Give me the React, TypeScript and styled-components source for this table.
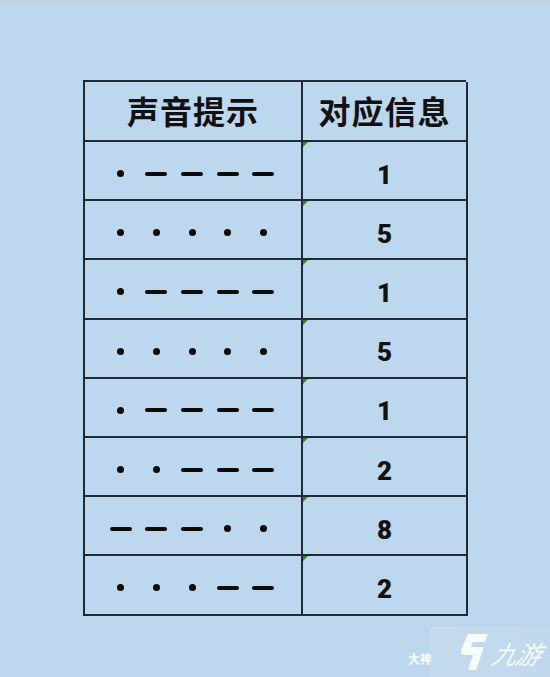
import React from 'react'
import styled, { createGlobalStyle } from 'styled-components'

const GlobalStyle = createGlobalStyle`
  html, body {
    margin: 0;
    padding: 0;
    background: #bdd7ee;
  }
`

const Page = styled.div`
  position: relative;
  width: 550px;
  height: 677px;
  background: #bdd7ee;
  border-top: 2px solid #c9d3dc;
  box-sizing: border-box;
  padding: 78px 0 0 83px;
  overflow: hidden;
`

const Table = styled.div`
  display: grid;
  grid-template-columns: 218px 165px;
  grid-template-rows: 60px repeat(8, 59.2px);
  width: 383px;
  border-top: 2px solid #1f2a36;
  border-left: 2px solid #1f2a36;
  box-sizing: border-box;
`

const Cell = styled.div<{ $mark?: boolean }>`
  position: relative;
  display: flex;
  align-items: center;
  justify-content: center;
  border-right: 2px solid #1f2a36;
  border-bottom: 2px solid #1f2a36;
  color: #111;

  ${({ $mark }) =>
    $mark &&
    `
    &::before {
      content: '';
      position: absolute;
      top: 0;
      left: 0;
      border-top: 5px solid #2f8a2a;
      border-right: 5px solid transparent;
    }
  `}
`

const HeadCell = styled(Cell)`
  font-family: 'Noto Sans CJK SC', 'Noto Sans', sans-serif;
  font-size: 32px;
  font-weight: 700;
  letter-spacing: 1px;
  padding-bottom: 2px;
`

const NumberCell = styled(Cell)`
  font-family: Roboto, 'Liberation Sans', sans-serif;
  font-size: 26px;
  font-weight: 900;
  padding-top: 8px;
`

const Morse = styled(Cell)`
  padding-top: 6px;
  padding-right: 2px;
`

const Slot = styled.span`
  display: flex;
  align-items: center;
  justify-content: center;
  width: 35.6px;
  height: 8px;
`

const Dot = styled.span`
  width: 7px;
  height: 7px;
  border-radius: 50%;
  background: #0a0a0a;
`

const Dash = styled.span`
  width: 22px;
  height: 4px;
  border-radius: 2px;
  background: #0a0a0a;
`

const Watermark = styled.div`
  position: absolute;
  right: 0;
  bottom: 0;
  width: 120px;
  height: 50px;
  display: flex;
  align-items: center;
  gap: 3px;
  padding-left: 28px;
  box-sizing: border-box;
  background: linear-gradient(90deg, rgba(205, 222, 238, 0.45), rgba(200, 219, 236, 0.3));
`

const Brand = styled.span`
  font-family: 'Noto Sans CJK SC', sans-serif;
  font-size: 25px;
  font-style: italic;
  color: rgba(255, 255, 255, 0.9);
  transform: skewX(-14deg);
  letter-spacing: -1px;
  padding-top: 2px;
`

const Credit = styled.span`
  position: absolute;
  left: 408px;
  bottom: 10px;
  font-family: 'Noto Sans CJK SC', sans-serif;
  font-size: 12px;
  font-weight: 700;
  color: #ffffff;
`

const rows: [string, string][] = [
  ['.----', '1'],
  ['.....', '5'],
  ['.----', '1'],
  ['.....', '5'],
  ['.----', '1'],
  ['..---', '2'],
  ['---..', '8'],
  ['...--', '2'],
]

const Logo = () => (
  <svg width="32" height="40" viewBox="0 0 32 40">
    <path
      d="M10 2 L30 2 L27 10 L15 10 L13 15 L26 15 L18 38 L10 38 L15 23 L7 23 Q2 23 3 18 Z"
      fill="rgba(255,255,255,0.9)"
    />
  </svg>
)

export default function App() {
  return (
    <>
      <GlobalStyle />
      <Page>
        <Table>
          <HeadCell>声音提示</HeadCell>
          <HeadCell>对应信息</HeadCell>
          {rows.map(([code, value], i) => (
            <React.Fragment key={i}>
              <Morse>
                {code.split('').map((c, j) => (
                  <Slot key={j}>{c === '.' ? <Dot /> : <Dash />}</Slot>
                ))}
              </Morse>
              <NumberCell $mark>{value}</NumberCell>
            </React.Fragment>
          ))}
        </Table>
        <Credit>大神</Credit>
        <Watermark>
          <Logo />
          <Brand>九游</Brand>
        </Watermark>
      </Page>
    </>
  )
}
